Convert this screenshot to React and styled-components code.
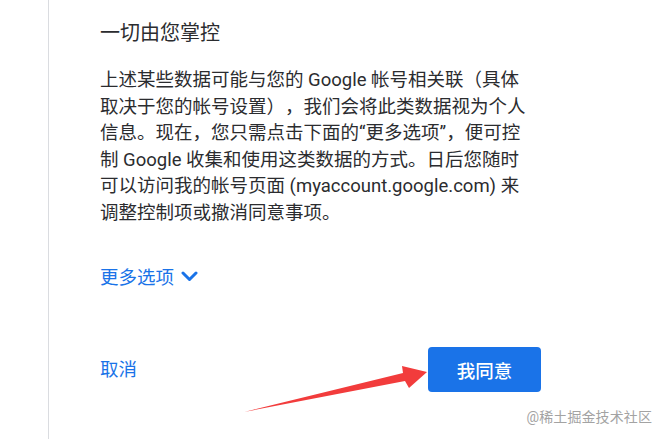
import React from 'react';
import styled, { createGlobalStyle } from 'styled-components';

const GlobalStyle = createGlobalStyle`
	html, body {
		margin: 0;
		padding: 0;
		background: #ffffff;
	}
	body {
		font-family: Roboto, "Noto Sans CJK SC", "Noto Sans", sans-serif;
		color: #202124;
		text-spacing-trim: space-all;
	}
`;

const Page = styled.div`
	position: relative;
	height: 100vh;
	overflow: hidden;
	padding-left: 48px;
	box-sizing: border-box;
`;

const Panel = styled.div`
	height: 100%;
	border-left: 1px solid #dadce0;
	padding: 19px 0 0 51px;
	box-sizing: border-box;
	display: flex;
	flex-direction: column;
	align-items: flex-start;
`;

const Title = styled.h2`
	margin: 0;
	font-size: 20px;
	line-height: 28px;
	font-weight: 400;
	color: #2b2c2f;
`;

const Body = styled.p`
	margin: 20px 0 0;
	font-size: 18.5px;
	line-height: 26.5px;
	color: #2b2c2f;
	white-space: nowrap;
	text-spacing-trim: space-all;
`;

const MoreLink = styled.button`
	margin-top: 36px;
	padding: 0;
	border: 0;
	background: none;
	display: flex;
	align-items: center;
	gap: 7px;
	height: 28px;
	font: inherit;
	font-size: 18.5px;
	color: #1a73e8;
	cursor: pointer;
`;

const Actions = styled.div`
	margin-top: 57px;
	width: 441px;
	display: flex;
	align-items: center;
	justify-content: space-between;
`;

const TextButton = styled.button`
	padding: 0;
	border: 0;
	background: none;
	font: inherit;
	font-size: 18.5px;
	line-height: 26px;
	color: #1a73e8;
	cursor: pointer;
`;

const PrimaryButton = styled.button`
	width: 113px;
	height: 45px;
	border: 0;
	border-radius: 4px;
	background: #1a73e8;
	color: #ffffff;
	font: inherit;
	font-size: 18.5px;
	font-weight: 500;
	cursor: pointer;
`;

const Annotation = styled.svg`
	position: absolute;
	left: 0;
	top: 0;
	pointer-events: none;
`;

const Watermark = styled.span`
	position: absolute;
	right: 13px;
	top: 407px;
	font-size: 14px;
	line-height: 20px;
	color: #a3a3a3;
	letter-spacing: 0.1px;
`;

const Chevron = () => (
	<svg width="17" height="11" viewBox="0 0 17 11" fill="none">
		<path d="M2 2l6.5 6.5L15 2" stroke="#1a73e8" strokeWidth="3" strokeLinecap="round" strokeLinejoin="round" />
	</svg>
);

export default function App() {
	return (
		<>
			<GlobalStyle />
			<Page>
				<Panel>
					<Title>一切由您掌控</Title>
					<Body>
						上述某些数据可能与您的 Google 帐号相关联（具体<br />
						取决于您的帐号设置），我们会将此类数据视为个人<br />
						信息。现在，您只需点击下面的“更多选项”，便可控<br />
						制 Google 收集和使用这类数据的方式。日后您随时<br />
						可以访问我的帐号页面 (myaccount.google.com) 来<br />
						调整控制项或撤消同意事项。
					</Body>
					<MoreLink>
						更多选项
						<Chevron />
					</MoreLink>
					<Actions>
						<TextButton>取消</TextButton>
						<PrimaryButton>我同意</PrimaryButton>
					</Actions>
				</Panel>
				<Annotation width="665" height="439" viewBox="0 0 665 439">
					<polygon points="244,412 403,373 402,366 427,372 409,388 405,381" fill="#f23c3c" />
				</Annotation>
				<Watermark>@稀土掘金技术社区</Watermark>
			</Page>
		</>
	);
}
